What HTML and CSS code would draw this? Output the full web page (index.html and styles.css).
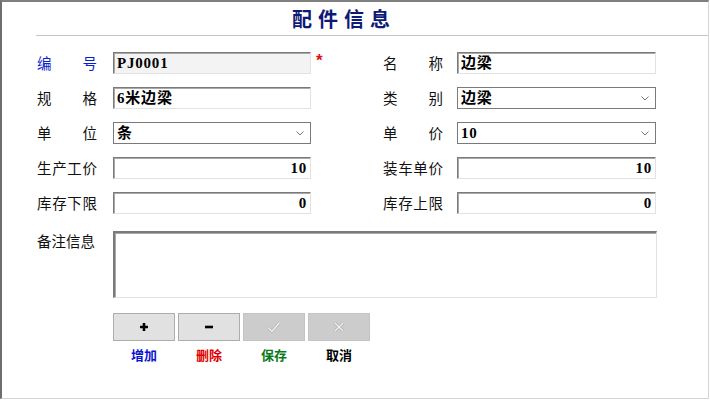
FILE: index.html
```html
<!DOCTYPE html>
<html lang="zh">
<head>
<meta charset="utf-8">
<title>配件信息</title>
<link rel="stylesheet" href="styles.css">
</head>
<body>
<div class="frame">
  <div class="header"><h1 class="title">配件信息</h1></div>
  <div class="form">
    <div class="grid">
      <div class="lbl blue">编号</div>
      <div class="box inset ro">PJ0001</div>
      <div class="req">*</div>
      <div class="lbl">名称</div>
      <div class="box inset">边梁</div>

      <div class="lbl">规格</div>
      <div class="box inset">6米边梁</div>
      <div></div>
      <div class="lbl">类别</div>
      <div class="box sel">边梁<svg class="chev" viewBox="0 0 8 5" width="8" height="5"><path d="M0.5 0.5 L4 4 L7.5 0.5" fill="none" stroke="#777" stroke-width="1"/></svg></div>

      <div class="lbl">单位</div>
      <div class="box sel">条<svg class="chev" viewBox="0 0 8 5" width="8" height="5"><path d="M0.5 0.5 L4 4 L7.5 0.5" fill="none" stroke="#777" stroke-width="1"/></svg></div>
      <div></div>
      <div class="lbl">单价</div>
      <div class="box sel">10<svg class="chev" viewBox="0 0 8 5" width="8" height="5"><path d="M0.5 0.5 L4 4 L7.5 0.5" fill="none" stroke="#777" stroke-width="1"/></svg></div>

      <div class="lbl">生产工价</div>
      <div class="box inset num">10</div>
      <div></div>
      <div class="lbl">装车单价</div>
      <div class="box inset num">10</div>

      <div class="lbl">库存下限</div>
      <div class="box inset num">0</div>
      <div></div>
      <div class="lbl">库存上限</div>
      <div class="box inset num">0</div>
    </div>
    <div class="memo-row">
      <div class="lbl memo-lbl">备注信息</div>
      <div class="memo inset"></div>
    </div>
    <div class="actions">
      <div class="action">
        <div class="btn"><svg viewBox="0 0 10 10" width="10" height="10"><path d="M5 1 V9 M1 5 H9" stroke="#000" stroke-width="2.6"/></svg></div>
        <div class="act-lbl c-blue">增加</div>
      </div>
      <div class="action">
        <div class="btn"><svg viewBox="0 0 10 10" width="10" height="10"><path d="M1 5 H9" stroke="#000" stroke-width="2.6"/></svg></div>
        <div class="act-lbl c-red">删除</div>
      </div>
      <div class="action">
        <div class="btn off"><svg viewBox="0 0 14 12" width="14" height="12"><path d="M1.5 7 L5 10.5 L12.5 1.5" fill="none" stroke="#b0b0b0" stroke-width="2.6"/><path d="M1.5 7 L5 10.5 L12.5 1.5" fill="none" stroke="#f4f4f4" stroke-width="1.2"/></svg></div>
        <div class="act-lbl c-green">保存</div>
      </div>
      <div class="action">
        <div class="btn off"><svg viewBox="0 0 12 12" width="12" height="12"><path d="M2 2 L10 10 M10 2 L2 10" fill="none" stroke="#b0b0b0" stroke-width="2.8"/><path d="M2 2 L10 10 M10 2 L2 10" fill="none" stroke="#f4f4f4" stroke-width="1.2"/></svg></div>
        <div class="act-lbl c-black">取消</div>
      </div>
    </div>
  </div>
</div>
</body>
</html>
```
FILE: styles.css
```css
html, body {
  margin: 0;
  padding: 0;
  background: #ffffff;
}
body {
  font-family: "Noto Sans CJK SC", "Liberation Sans", sans-serif;
  color: #111;
}
.frame {
  width: 709px;
  height: 399px;
  box-sizing: border-box;
  border-top: 2px solid #7f7f7f;
  border-left: 2px solid #6e6e6e;
  border-right: 1px solid #d4d4d4;
  border-bottom: 1px solid #d4d4d4;
}
.header {
  margin-left: 34px;
  height: 33px;
  border-bottom: 1px solid #c4c4c4;
  padding-left: 256px;
}
.title {
  margin: 0;
  font-size: 20px;
  line-height: 33px;
  font-weight: 700;
  letter-spacing: 6px;
  color: #0d1a78;
}
.form {
  padding-top: 16px;
  padding-left: 35px;
}
.grid {
  display: grid;
  grid-template-columns: 76px 198px 72px 74px 199px;
  grid-auto-rows: 22px;
  row-gap: 13px;
  align-items: center;
}
.lbl {
  width: 60px;
  font-size: 14.5px;
  line-height: 22px;
  white-space: nowrap;
  text-align: justify;
  text-align-last: justify;
  color: #111;
}
.lbl.blue { color: #0a1ed0; }
.box {
  height: 22px;
  box-sizing: border-box;
  font-family: "Liberation Serif", "Noto Sans CJK SC", serif;
  font-weight: 700;
  font-size: 15px;
  letter-spacing: 0.8px;
  line-height: 20px;
  padding: 0 3px 0 3px;
  white-space: nowrap;
  color: #000;
  background: #fff;
}
.inset {
  border: 1px solid;
  border-color: #7a7a7a #e2e2e2 #e2e2e2 #7a7a7a;
  box-shadow: inset 1px 1px 0 #a8a8a8;
}
.ro { background: #f3f3f3; }
.num { text-align: right; }
.sel {
  border: 1px solid #7a7a7a;
  display: flex;
  align-items: center;
  justify-content: space-between;
  padding-right: 6px;
}
.chev { flex: none; }
.req {
  align-self: start;
  padding-left: 5px;
  color: #e01010;
  font-family: "Liberation Sans", sans-serif;
  font-weight: 700;
  font-size: 17px;
  line-height: 18px;
}
.memo-row {
  display: flex;
  margin-top: 17px;
}
.memo-lbl {
  width: 76px;
  text-align-last: auto;
  text-align: left;
  line-height: 20px;
}
.memo {
  width: 544px;
  height: 67px;
  box-sizing: border-box;
  border-width: 2px 1px 1px 2px;
  background: #fff;
}
.actions {
  display: flex;
  gap: 3px;
  margin-top: 15px;
  padding-left: 76px;
}
.action {
  width: 62px;
  display: flex;
  flex-direction: column;
  align-items: center;
}
.btn {
  width: 62px;
  height: 28px;
  box-sizing: border-box;
  border: 1px solid #adadad;
  background: #e1e1e1;
  display: flex;
  align-items: center;
  justify-content: center;
}
.btn.off {
  background: #cccccc;
  border-color: #c4c4c4;
}
.act-lbl {
  margin-top: 5px;
  font-size: 13px;
  font-weight: 700;
  line-height: 17px;
}
.c-blue { color: #0a14d0; }
.c-red { color: #e00000; }
.c-green { color: #0a7a1a; }
.c-black { color: #000; }
```
